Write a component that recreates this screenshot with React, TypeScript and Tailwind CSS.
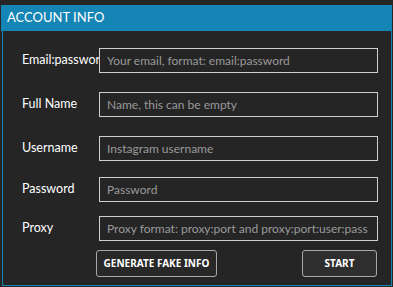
export default function App() {
  const rows = [
    { label: "Email:password", placeholder: "Your email, format: email:password", mt: "mt-[17px]" },
    { label: "Full Name", placeholder: "Name, this can be empty", mt: "mt-[19px]" },
    { label: "Username", placeholder: "Instagram username", mt: "mt-[19px]" },
    { label: "Password", placeholder: "Password", mt: "mt-[16px]" },
    { label: "Proxy", placeholder: "Proxy format: proxy:port and proxy:port:user:pass", mt: "mt-[14px]" },
  ];

  return (
    <div className="h-[287px] w-[393px] bg-[#252526] pt-[5px] font-['Lato',sans-serif]">
      <div className="ml-[2px] flex h-[281px] w-[390px] flex-col border border-t-0 border-[#1884b6]">
        <div className="-ml-[2px] -mr-px flex h-[26px] items-center bg-[#1585b5] pl-[6px] text-[13px] text-white">
          ACCOUNT INFO
        </div>
        {rows.map((row) => (
          <div key={row.label} className={`flex items-center ${row.mt}`}>
            <label className="w-[96px] shrink-0 overflow-hidden whitespace-nowrap pl-[19px] text-[12.5px] text-white">{row.label}</label>
            <input
              placeholder={row.placeholder}
              className="h-[25px] w-[279px] border border-[#cfcfcf] bg-transparent pl-[7px] pr-[4px] text-[12px] text-white outline-none placeholder:text-[#9a9a9a]"
            />
          </div>
        ))}
        <div className="mt-[9px] flex">
          <button className="ml-[93px] h-[27px] w-[121px] rounded-[3px] border border-[#a8a8a8] bg-[#282828] font-['Noto_Sans',sans-serif] text-[10px] font-bold text-white">
            GENERATE FAKE INFO
          </button>
          <button className="ml-[85px] h-[27px] w-[75px] rounded-[3px] border border-[#a8a8a8] bg-[#2e2e2e] font-['Noto_Sans',sans-serif] text-[10px] font-bold text-white">
            START
          </button>
        </div>
      </div>
    </div>
  );
}
